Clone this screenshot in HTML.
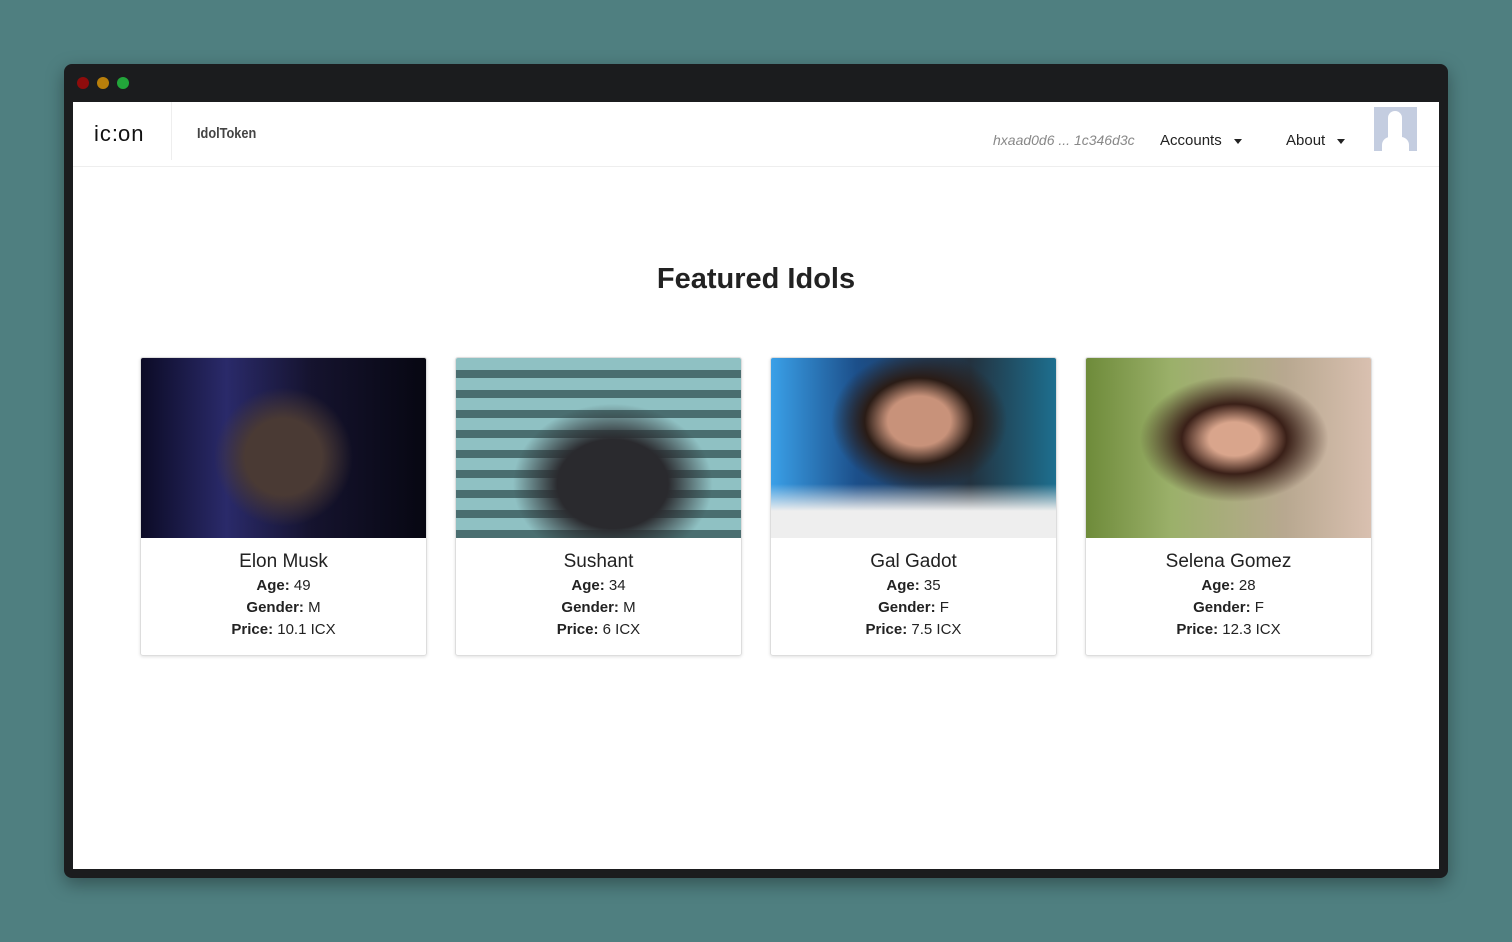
<!DOCTYPE html>
<html><head><meta charset="utf-8"><style>
body{margin:0;width:1512px;height:942px;background:#4f7f80;font-family:"Liberation Sans",sans-serif;position:relative;overflow:hidden}
.win{position:absolute;left:64px;top:64px;width:1384px;height:814px;background:#1b1c1e;border-radius:8px;box-shadow:0 6px 18px rgba(0,0,0,.35)}
.dot{position:absolute;top:13px;width:12px;height:12px;border-radius:50%}
.page{position:absolute;left:9px;top:38px;width:1366px;height:767px;background:#fff}
.nav{height:64px;border-bottom:1px solid #eee;position:relative}
.logo{position:absolute;left:21px;top:19px;font-size:22px;letter-spacing:1px;color:#111}
.sep{position:absolute;left:98px;top:0;height:58px;border-left:1px solid #eee}
.brand{position:absolute;left:124px;top:23px;font-size:15px;color:#444;font-weight:bold;transform:scaleX(.85);transform-origin:left}
.nv{position:absolute;top:30px;font-size:15px;color:#222}
.car{display:inline-block;border-left:4px solid transparent;border-right:4px solid transparent;border-top:5px solid #222;vertical-align:middle;margin-left:12px}
h1{position:absolute;left:0;width:1366px;top:161px;margin:0;text-align:center;font-size:29px;color:#222;font-weight:bold}
.card{position:absolute;top:255px;width:285px;height:297px;border:1px solid #ddd;border-radius:3px;box-shadow:0 1px 3px rgba(0,0,0,.12);text-align:center;font-size:15px;color:#222;overflow:hidden}
.img{height:180px}
.card h3{margin:13px 0 2px;font-size:19px;font-weight:normal;color:#222}
.card p{margin:0;line-height:22px}
</style></head><body>
<div class="win">
<div class="dot" style="left:13px;background:#8e0c0c"></div>
<div class="dot" style="left:33px;background:#b97f0b"></div>
<div class="dot" style="left:53px;background:#22a53a"></div>
<div class="page">
<div class="nav">
<div class="logo">ic<span style="letter-spacing:0">:</span>on</div>
<div class="sep"></div>
<div class="brand">IdolToken</div>
<div class="nv" style="left:920px;color:#888;font-style:italic;font-size:14px">hxaad0d6 ... 1c346d3c</div>
<div class="nv" style="left:1087px">Accounts<span class="car"></span></div>
<div class="nv" style="left:1213px">About<span class="car"></span></div>
<div style="position:absolute;left:1301px;top:5px;width:43px;height:44px;background:#c4cde0;overflow:hidden"><div style="position:absolute;left:14px;top:4px;width:14px;height:30px;background:#fff;border-radius:7px 7px 2px 2px"></div><div style="position:absolute;left:8px;top:30px;width:27px;height:20px;background:#fff;border-radius:8px 8px 0 0"></div></div>
</div>
<h1>Featured Idols</h1>
<div class="card" style="left:67px"><div class="img" style="background:radial-gradient(circle at 50% 55%,#4a3a34 0 22%,transparent 40%),linear-gradient(90deg,#0c0b26,#2a2a6a 30%,#15132e 60%,#070712)"></div><h3>Elon Musk</h3><p><b>Age:</b> 49</p><p><b>Gender:</b> M</p><p><b>Price:</b> 10.1 ICX</p></div>
<div class="card" style="left:382px"><div class="img" style="background:radial-gradient(ellipse at 55% 70%,#2a2a2e 0 25%,transparent 45%),repeating-linear-gradient(180deg,#8fc1c3 0 12px,#4a6e70 12px 20px)"></div><h3>Sushant</h3><p><b>Age:</b> 34</p><p><b>Gender:</b> M</p><p><b>Price:</b> 6 ICX</p></div>
<div class="card" style="left:697px"><div class="img" style="background:radial-gradient(ellipse at 52% 35%,#c8927a 0 15%,#2a1c16 26%,transparent 42%),linear-gradient(180deg,transparent 70%,#eee 85%),linear-gradient(90deg,#3aa0e8,#1c4f8a 30%,#23323f 70%,#1d6f8f)"></div><h3>Gal Gadot</h3><p><b>Age:</b> 35</p><p><b>Gender:</b> F</p><p><b>Price:</b> 7.5 ICX</p></div>
<div class="card" style="left:1012px"><div class="img" style="background:radial-gradient(ellipse at 52% 45%,#d9a58c 0 12%,#3a2018 25%,transparent 45%),linear-gradient(90deg,#6e8b3a,#9bb06a 30%,#b8a890 70%,#d9c0b0)"></div><h3>Selena Gomez</h3><p><b>Age:</b> 28</p><p><b>Gender:</b> F</p><p><b>Price:</b> 12.3 ICX</p></div>
</div></div>
</body></html>
